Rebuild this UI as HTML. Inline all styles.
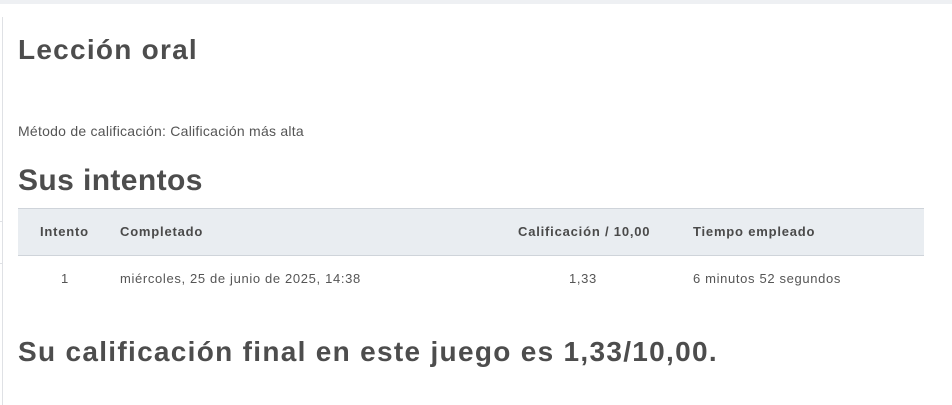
<!DOCTYPE html>
<html><head><meta charset="utf-8"><style>
body{margin:0;width:952px;height:405px;background:#fff;position:relative;overflow:hidden;font-family:"Liberation Sans",sans-serif;color:#505050}
.t{position:absolute;white-space:nowrap}
.th{font-weight:bold;font-size:13px;color:#4a4a4a;letter-spacing:0.8px}
.td{font-size:13px;color:#555;letter-spacing:0.65px}
</style></head><body>
<div style="position:absolute;left:0;top:0;width:952px;height:4px;background:#eef0f3"></div>
<div style="position:absolute;left:2px;top:17px;width:1px;height:388px;background:#dfe1e5"></div>
<div style="position:absolute;left:0;top:221px;width:2px;height:1px;background:#dfe1e5"></div>
<div style="position:absolute;left:0;top:263px;width:2px;height:1px;background:#dfe1e5"></div>
<div class="t" style="left:18px;top:34px;font-size:28px;font-weight:bold;color:#4d4d4d;letter-spacing:1.25px">Lección oral</div>
<div class="t" style="left:18px;top:123px;font-size:14px;color:#555;letter-spacing:0.25px">Método de calificación: Calificación más alta</div>
<div class="t" style="left:18px;top:164px;font-size:30px;font-weight:bold;color:#4d4d4d;letter-spacing:0.4px">Sus intentos</div>
<div style="position:absolute;left:18px;top:208px;width:906px;height:46px;background:#e9edf1;border-top:1px solid #cfd4da;border-bottom:1px solid #cfd4da"></div>
<div class="t th" style="left:40px;top:224px">Intento</div>
<div class="t th" style="left:120px;top:224px">Completado</div>
<div class="t th" style="left:518px;top:224px">Calificación / 10,00</div>
<div class="t th" style="left:693px;top:224px">Tiempo empleado</div>
<div class="t td" style="left:61px;top:271px">1</div>
<div class="t td" style="left:120px;top:271px">miércoles, 25 de junio de 2025, 14:38</div>
<div class="t td" style="left:569px;top:271px">1,33</div>
<div class="t td" style="left:693px;top:271px">6 minutos 52 segundos</div>
<div class="t" style="left:18px;top:336px;font-size:28px;font-weight:bold;color:#4d4d4d;letter-spacing:1.3px">Su calificación final en este juego es 1,33/10,00.</div>
</body></html>
